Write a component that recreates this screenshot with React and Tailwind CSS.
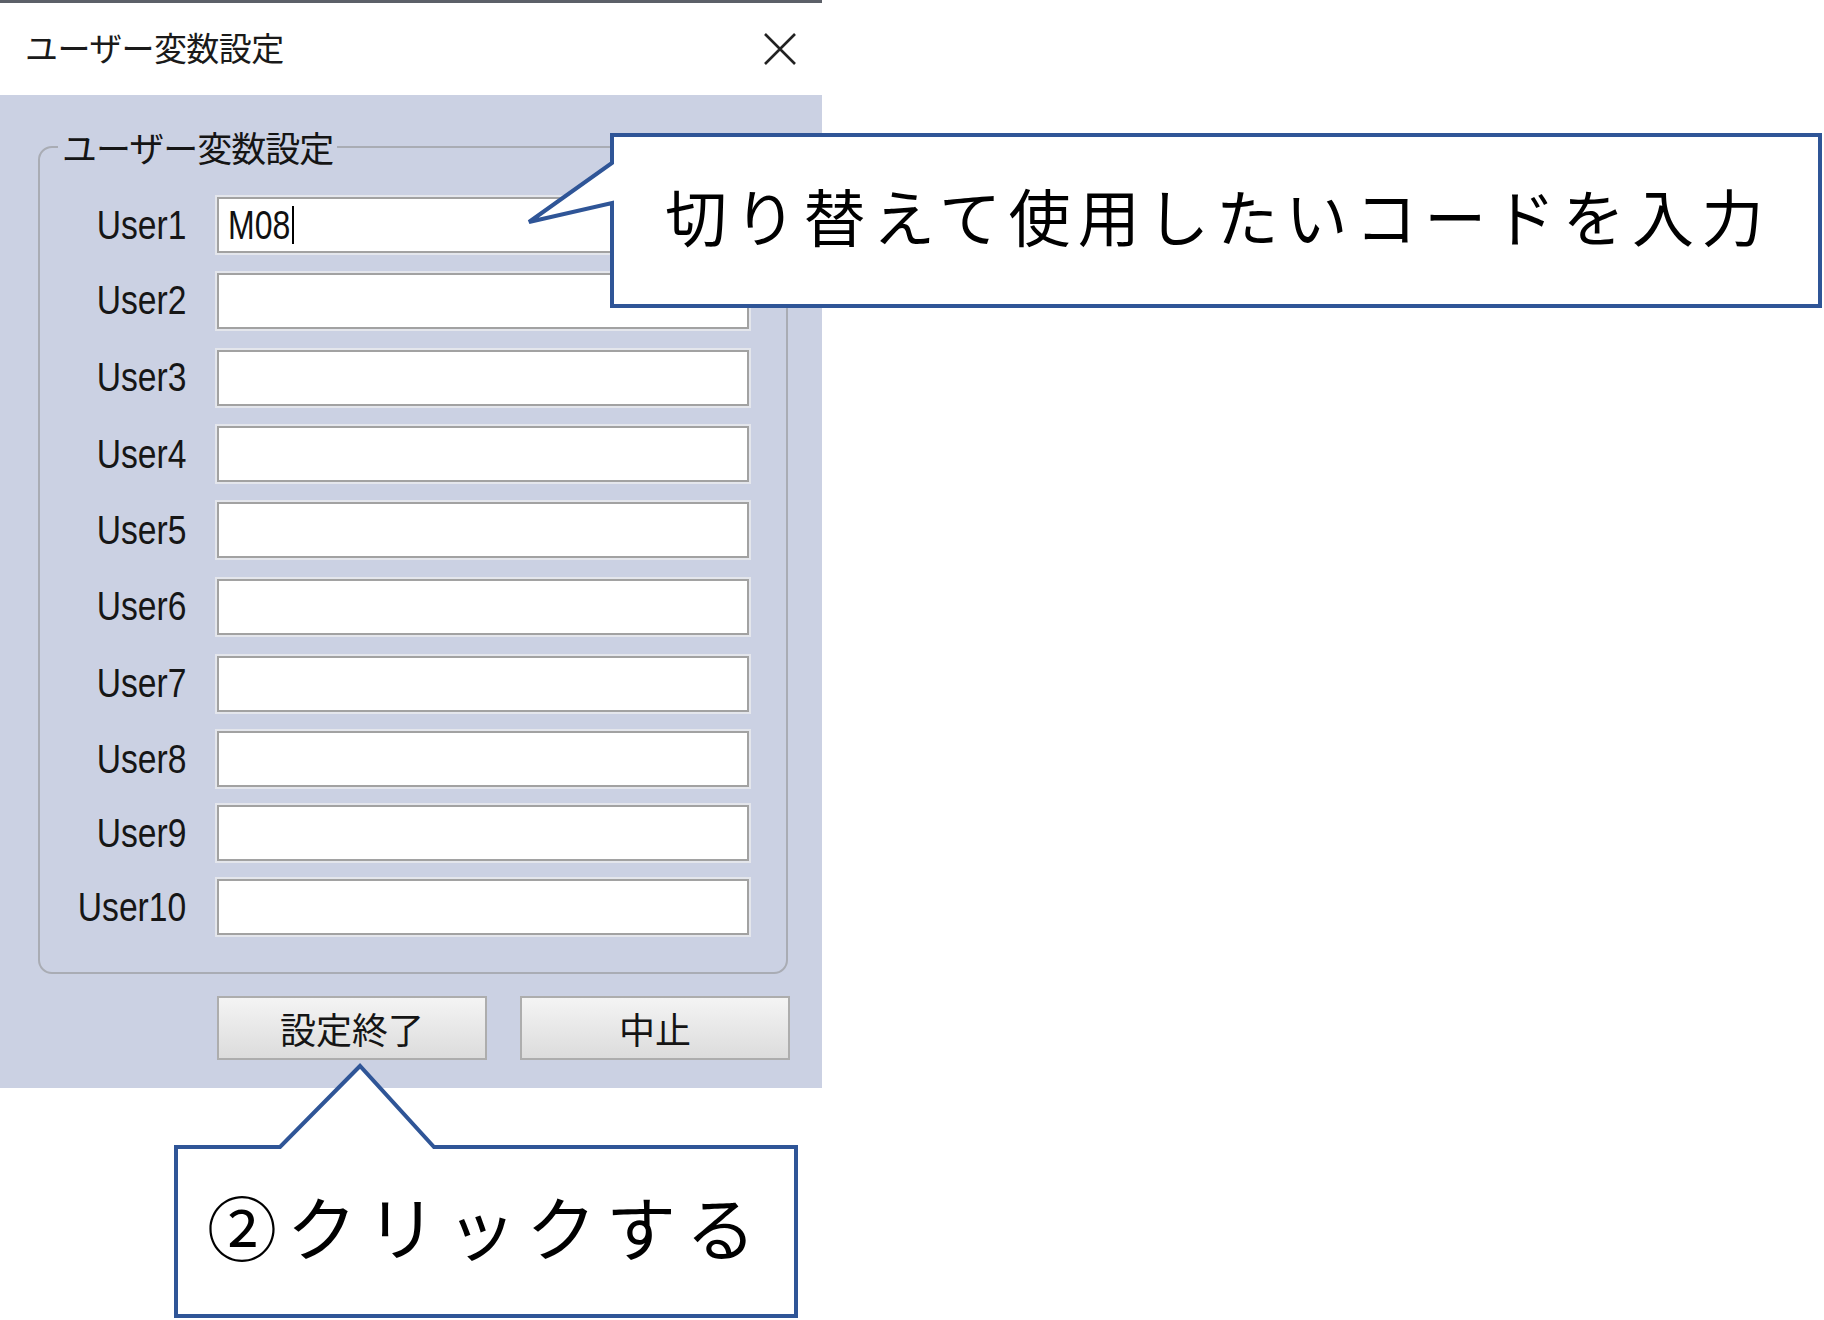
import React from "react";

const jp = { fontFamily: '"Noto Sans CJK JP", "Noto Sans", sans-serif' };

// row heights follow the uneven spacing of the original dialog
const users = [
  { name: "User1", h: "h-[74px]" },
  { name: "User2", h: "h-[77px]" },
  { name: "User3", h: "h-[77px]" },
  { name: "User4", h: "h-[76px]" },
  { name: "User5", h: "h-[76px]" },
  { name: "User6", h: "h-[77px]" },
  { name: "User7", h: "h-[77px]" },
  { name: "User8", h: "h-[74px]" },
  { name: "User9", h: "h-[74px]" },
  { name: "User10", h: "h-[74px]" },
];

const CloseIcon = () => (
  <svg width="36" height="36" viewBox="0 0 36 36">
    <path d="M3 3 L33 33 M33 3 L3 33" stroke="#222" strokeWidth="2.6" fill="none" />
  </svg>
);

const Callouts = () => (
  <svg className="absolute left-0 top-0 pointer-events-none" width="1824" height="1320" viewBox="0 0 1824 1320">
    {/* callout 1 : pointer to User1 */}
    <path
      d="M612 135 L1820 135 L1820 306 L612 306 L612 203 L529 222 L612 163 Z"
      fill="#fff"
      stroke="#2f5597"
      strokeWidth="4"
    />
    {/* callout 2 : pointer to 設定終了 */}
    <path
      d="M176 1147 L280 1147 L360 1066 L434 1147 L796 1147 L796 1316 L176 1316 Z"
      fill="#fff"
      stroke="#2f5597"
      strokeWidth="4"
    />
  </svg>
);

const App = () => {
  return (
    <div className="relative w-[1824px] h-[1320px] bg-white overflow-hidden" style={jp}>
      {/* dialog */}
      <div className="w-[822px] flex flex-col">
        <div className="h-[3px] bg-[#5c6068]" />
        <div className="h-[92px] flex items-center justify-between pl-[25px] pr-[24px]">
          <span className="text-[33px] leading-none text-[#1a1a1a] tracking-[-0.6px] pb-[3px]">ユーザー変数設定</span>
          <CloseIcon />
        </div>

        <div className="h-[993px] bg-[#cbd1e3] pl-[38px] pt-[32px]">
          <fieldset className="w-[750px] border-2 border-[#a9acb4] rounded-[14px] pl-0 pr-0 pt-[21px] pb-[28px] m-0">
            <legend className="ml-[18px] px-[4px] text-[35px] leading-[40px] text-[#151515] tracking-[-1px]">
              ユーザー変数設定
            </legend>
            <div className="flex flex-col">
              {users.map((u, i) => (
                <div key={u.name} className={`${u.h} flex items-center`}>
                  <div className="w-[146px] flex justify-end">
                    <span
                      className="inline-block origin-right scale-x-[0.82] text-[41px] leading-none text-[#161616]"
                      style={{ fontFamily: '"Liberation Sans", Arial, sans-serif' }}
                    >
                      {u.name}
                    </span>
                  </div>
                  <div className="ml-[31px] w-[532px] h-[56px] bg-white border-2 border-[#a2a2a2] outline-2 outline-[#e4e6ec] flex items-center pl-[9px]">
                    {i === 0 && (
                      <span className="flex items-center">
                        <span
                          className="inline-block origin-left scale-x-[0.8] text-[40px] leading-none text-[#111]"
                          style={{ fontFamily: '"Liberation Sans", Arial, sans-serif' }}
                        >
                          M08
                        </span>
                        <span className="-ml-[14px] w-[2px] h-[38px] bg-black" />
                      </span>
                    )}
                  </div>
                </div>
              ))}
            </div>
          </fieldset>

          <div className="flex gap-[33px] pl-[179px] mt-[22px]">
            <button className="w-[270px] h-[64px] border-2 border-[#adadad] bg-gradient-to-b from-[#f4f4f4] to-[#dcdcdc] text-[36px] leading-none text-[#151515] flex items-center justify-center">
              設定終了
            </button>
            <button className="w-[270px] h-[64px] border-2 border-[#adadad] bg-gradient-to-b from-[#f4f4f4] to-[#dcdcdc] text-[36px] leading-none text-[#151515] flex items-center justify-center">
              中止
            </button>
          </div>
        </div>
      </div>

      {/* annotation callouts */}
      <Callouts />
      <div className="absolute left-[612px] top-[135px] w-[1208px] h-[171px] flex items-center pl-[53px] pb-[12px]">
        <span className="text-[62px] leading-none tracking-[7.3px] text-black">切り替えて使用したいコードを入力</span>
      </div>
      <div className="absolute left-[176px] top-[1147px] w-[620px] h-[169px] flex items-center pl-[31px] pb-[12px]">
        <span className="text-[70px] leading-none tracking-[9.8px] text-black">②クリックする</span>
      </div>
    </div>
  );
};

export default App;
